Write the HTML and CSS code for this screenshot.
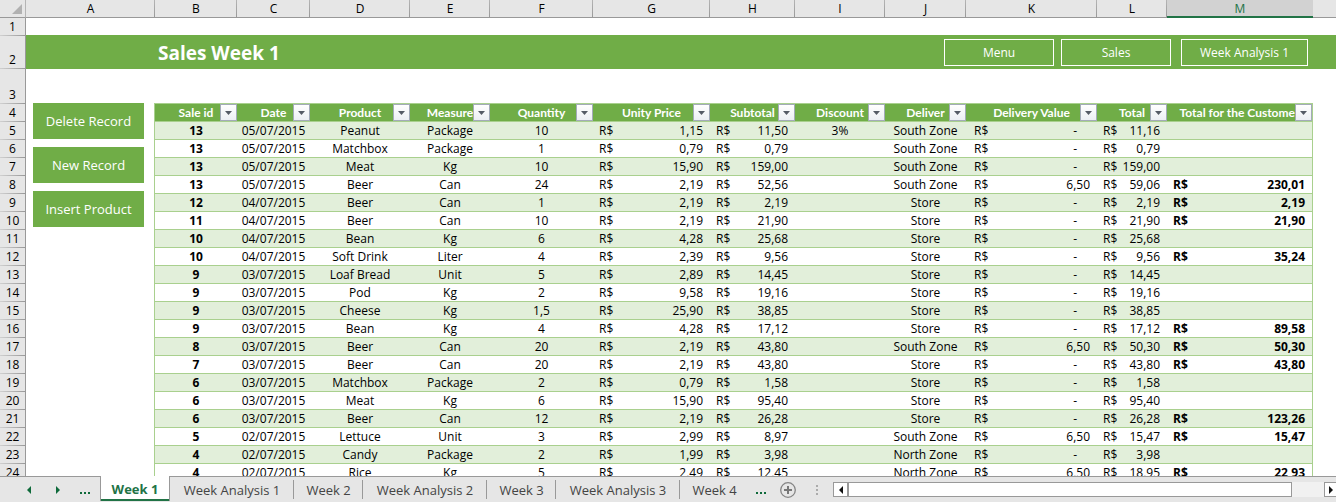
FILE: index.html
```html
<!DOCTYPE html>
<html lang="en">
<head>
<meta charset="utf-8">
<title>Sales Week 1</title>
<link rel="stylesheet" href="styles.css">
</head>
<body>
<div class="app">
  <div class="col-heads">
    <div class="corner"><svg width="10" height="10" viewBox="0 0 10 10"><path d="M10 0V10H0Z" fill="#b1b1b1"/></svg></div>
    <div class="col-head w-a">A</div>
    <div class="col-head w-b">B</div>
    <div class="col-head w-c">C</div>
    <div class="col-head w-d">D</div>
    <div class="col-head w-e">E</div>
    <div class="col-head w-f">F</div>
    <div class="col-head w-g">G</div>
    <div class="col-head w-h">H</div>
    <div class="col-head w-i">I</div>
    <div class="col-head w-j">J</div>
    <div class="col-head w-k">K</div>
    <div class="col-head w-l">L</div>
    <div class="col-head w-m selected">M</div>
    <div class="col-head w-rest"></div>
  </div>

  <div class="sheet">
    <div class="row-heads" id="row-heads"></div>
    <main class="cells">
      <header class="banner">
        <h1 class="title">Sales Week 1</h1>
        <nav class="banner-nav">
          <button class="nav-button" type="button">Menu</button>
          <button class="nav-button" type="button">Sales</button>
          <button class="nav-button wide" type="button">Week Analysis 1</button>
        </nav>
      </header>
      <div class="body">
        <aside class="actions">
          <button class="action" type="button">Delete Record</button>
          <button class="action" type="button">New Record</button>
          <button class="action" type="button">Insert Product</button>
        </aside>
        <div class="table-area">
          <table class="sales">
            <colgroup>
              <col class="c-b"><col class="c-c"><col class="c-d"><col class="c-e"><col class="c-f"><col class="c-g"><col class="c-h"><col class="c-i"><col class="c-j"><col class="c-k"><col class="c-l"><col class="c-m">
            </colgroup>
            <thead><tr id="sales-head"></tr></thead>
            <tbody id="sales-body"></tbody>
          </table>
        </div>
        <div class="margin-right"></div>
      </div>
    </main>
  </div>

  <footer class="tab-bar">
    <div class="tab-nav">
      <button class="icon-button" type="button" aria-label="Previous sheet"><svg width="4" height="8" viewBox="0 0 4 8"><path d="M4 0V8L0 4Z" fill="#0e6a3a"/></svg></button>
      <button class="icon-button" type="button" aria-label="Next sheet"><svg width="4" height="8" viewBox="0 0 4 8"><path d="M0 0V8L4 4Z" fill="#0e6a3a"/></svg></button>
      <button class="icon-button" type="button" aria-label="More sheets"><svg width="11" height="8" viewBox="0 0 11 8"><path d="M0 6h2v2H0zM4 6h2v2H4zM8 6h2v2H8z" fill="#0e6a3a"/></svg></button>
    </div>
    <div class="tabs">
      <button class="tab active" type="button">Week 1</button>
      <button class="tab analysis" type="button">Week Analysis 1</button>
      <button class="tab" type="button">Week 2</button>
      <button class="tab analysis" type="button">Week Analysis 2</button>
      <button class="tab" type="button">Week 3</button>
      <button class="tab analysis" type="button">Week Analysis 3</button>
      <button class="tab last" type="button">Week 4</button>
    </div>
    <div class="tab-tools">
      <button class="icon-button" type="button" aria-label="Hidden sheets"><svg width="11" height="8" viewBox="0 0 11 8"><path d="M0 6h2v2H0zM4 6h2v2H4zM8 6h2v2H8z" fill="#0e6a3a"/></svg></button>
      <button class="icon-button" type="button" aria-label="New sheet"><svg width="16" height="16" viewBox="0 0 16 16"><circle cx="8" cy="8" r="7.3" fill="none" stroke="#858585" stroke-width="1.3"/><path d="M7 4h2v3h3v2H9v3H7V9H4V7h3z" fill="#777"/></svg></button>
      <svg class="grip" width="2" height="10" viewBox="0 0 2 10"><path d="M0 0h2v2H0zM0 4h2v2H0zM0 8h2v2H0z" fill="#ababab"/></svg>
    </div>
    <div class="scrollbar">
      <button class="scroll-button" type="button" aria-label="Scroll left"><svg width="4" height="8" viewBox="0 0 4 8"><path d="M4 0V8L0 4Z" fill="#111"/></svg></button>
      <div class="scroll-thumb"></div>
      <div class="scroll-track"></div>
      <button class="scroll-button end" type="button" aria-label="Scroll right"><svg width="4" height="8" viewBox="0 0 4 8"><path d="M0 0V8L4 4Z" fill="#111"/></svg></button>
    </div>
  </footer>
</div>
<script src="app.js"></script>
</body>
</html>
```
FILE: styles.css
```css
:root {
  --green: #70ad47;
  --line: #a9d08e;
  --band: #e2efda;
  --chrome: #e6e6e6;
  --chrome-line: #999999;
  --accent: #217346;
  --ui: "Open Sans", "Noto Sans", sans-serif;
  --heading: Lato, "Open Sans", sans-serif;
}

* { box-sizing: border-box; }

body {
  margin: 0;
  background: #fff;
  color: #000;
  font-family: var(--ui);
  font-size: 12px;
}

button {
  margin: 0;
  padding: 0;
  border: 0;
  background: none;
  color: inherit;
  font: inherit;
  white-space: nowrap;
}

svg { display: block; flex: none; }

.app {
  display: flex;
  flex-direction: column;
  height: 100vh;
  overflow: hidden;
}

/* column letters */
.col-heads {
  display: flex;
  flex: none;
  height: 18px;
  background: var(--chrome);
}

.corner {
  display: flex;
  flex: none;
  justify-content: flex-end;
  align-items: flex-end;
  width: 26px;
  padding: 0 3px 3px 0;
  border-right: 1px solid #b4b4b4;
  border-bottom: 1px solid var(--chrome-line);
}

.col-head {
  min-width: 0;
  border-bottom: 1px solid var(--chrome-line);
  background: linear-gradient(#b4b4b4, #999) right / 1px 100% no-repeat;
  line-height: 17px;
  text-align: center;
}

.col-head.selected {
  border-bottom: 2px solid var(--accent);
  background: #d2d2d2;
  color: var(--accent);
}

.w-a { flex: 129 1 0; }
.w-b { flex: 82 1 0; }
.w-c { flex: 73 1 0; }
.w-d { flex: 100 1 0; }
.w-e { flex: 80 1 0; }
.w-f { flex: 103 1 0; }
.w-g { flex: 117 1 0; }
.w-h { flex: 85 1 0; }
.w-i { flex: 90 1 0; }
.w-j { flex: 81 1 0; }
.w-k { flex: 131 1 0; }
.w-l { flex: 70 1 0; }
.w-m { flex: 146 1 0; }
.w-rest { flex: 23 1 0; background: none; }

/* grid area */
.sheet {
  display: flex;
  flex: 1;
  min-height: 0;
  overflow: hidden;
}

.row-heads {
  flex: none;
  width: 26px;
  border-right: 1px solid var(--chrome-line);
  background: var(--chrome);
}

.row-head {
  display: flex;
  justify-content: center;
  align-items: flex-end;
  height: 18px;
  background: linear-gradient(to right, #d0d0d0, #999) bottom / 100% 1px no-repeat;
  line-height: 18px;
}

.row-head.banner-row { height: 33px; }
.row-head.spacer-row { height: 35px; }

.cells {
  flex: 1;
  min-width: 0;
  padding-top: 17px;
}

.banner {
  display: flex;
  justify-content: space-between;
  align-items: center;
  height: 34px;
  padding: 0 28px 0 132px;
  background: var(--green);
  color: #fff;
}

.title {
  margin: 0;
  padding-top: 2px;
  font-size: 19px;
  font-weight: 700;
  line-height: 32px;
}

.banner-nav {
  display: flex;
  gap: 7px;
}

.nav-button {
  width: 110px;
  height: 27px;
  padding-top: 1px;
  border: 1px solid #fff;
}

.nav-button.wide {
  width: 127px;
  margin-left: 3px;
}

.body {
  display: flex;
  margin-top: 34px;
}

.actions {
  display: flex;
  flex: 128 1 0;
  flex-direction: column;
  gap: 8px;
  min-width: 0;
}

.action {
  height: 36px;
  margin: 0 10px 0 7px;
  background: var(--green);
  color: #fff;
  font-size: 13px;
}

.table-area { flex: 1159 1 0; min-width: 0; }
.margin-right { flex: 23 1 0; }

.sales {
  width: 100%;
  border-right: 1px solid var(--line);
  border-left: 1px solid var(--line);
  border-collapse: separate;
  border-spacing: 0;
  table-layout: fixed;
}

.c-b { width: 82px; }
.c-c { width: 73px; }
.c-d { width: 100px; }
.c-e { width: 80px; }
.c-f { width: 103px; }
.c-g { width: 117px; }
.c-h { width: 85px; }
.c-i { width: 90px; }
.c-j { width: 81px; }
.c-k { width: 131px; }
.c-l { width: 70px; }
.c-m { width: 145px; }

.sales th,
.sales td {
  height: 18px;
  padding: 1px 0 0;
  border-bottom: 1px solid var(--line);
  line-height: 16px;
  text-align: center;
  white-space: nowrap;
}

.sales thead th {
  position: relative;
  height: 19px;
  border-top: 1px solid var(--line);
  background: var(--green);
  color: #fff;
  font-family: var(--heading);
  font-weight: 700;
}

.sales tbody tr:nth-child(odd) { background: var(--band); }

.head-label {
  display: flex;
  justify-content: center;
  overflow: hidden;
}

.filter {
  position: absolute;
  top: 0;
  right: 0;
  display: flex;
  justify-content: center;
  align-items: center;
  width: 17px;
  height: 17px;
  border: 1px solid #a3abb8;
  background: linear-gradient(#fff, #eceff4);
}

.money {
  display: flex;
  justify-content: space-between;
  padding: 0 7px 0 6px;
}

.money.delivery { padding-left: 8px; }
.money.dash { padding-right: 20px; }
.strong { font-weight: 700; }

/* sheet tabs */
.tab-bar {
  display: flex;
  flex: none;
  height: 26px;
  background: var(--chrome);
  color: #444;
  font-size: 13px;
}

.tab-nav {
  display: flex;
  flex: none;
  align-items: center;
  gap: 25px;
  width: 100px;
  padding-left: 27px;
  border-top: 1px solid var(--chrome-line);
}

.tab-nav .icon-button:last-child { margin-left: -5px; }

.tabs { display: flex; }

.tab {
  width: 69px;
  border-top: 1px solid var(--chrome-line);
  background: linear-gradient(#999, #999) right 3px / 1px 19px no-repeat;
}

.tab.analysis { width: 124px; }
.tab.last { background: none; }

.tab.active {
  width: 70px;
  margin-bottom: 1px;
  border: solid var(--chrome-line);
  border-width: 0 1px;
  background: linear-gradient(var(--accent), var(--accent)) bottom / 100% 2px no-repeat #fff;
  color: var(--accent);
  font-weight: 700;
}

.tab-tools {
  display: flex;
  flex: none;
  align-items: center;
  gap: 13px;
  width: 84px;
  padding-left: 7px;
  border-top: 1px solid var(--chrome-line);
}

.grip { margin-left: 7px; }

.scrollbar {
  display: flex;
  flex: 1;
  align-items: center;
  min-width: 0;
  border-top: 1px solid var(--chrome-line);
}

.scroll-button {
  display: flex;
  flex: none;
  justify-content: center;
  align-items: center;
  width: 15px;
  height: 15px;
  border: 1px solid var(--chrome-line);
  background: #fff;
}

.scroll-button.end { width: 12px; border-right: 0; }

.scroll-thumb {
  flex: 444 1 0;
  height: 15px;
  border: 1px solid var(--chrome-line);
  background: #fff;
}

.scroll-track {
  flex: 32 1 0;
  height: 15px;
  background: #f1f1f1;
}
```
FILE: app.js
```js
const heads = ["Sale id", "Date", "Product", "Measure", "Quantity", "Unity Price",
  "Subtotal", "Discount", "Deliver", "Delivery Value", "Total", "Total for the Customer"];

// id | date | product | measure | quantity | price | subtotal | discount | deliver | delivery | total | customer total
const records = `13|05/07/2015|Peanut|Package|10|1,15|11,50|3%|South Zone|-|11,16|
13|05/07/2015|Matchbox|Package|1|0,79|0,79||South Zone|-|0,79|
13|05/07/2015|Meat|Kg|10|15,90|159,00||South Zone|-|159,00|
13|05/07/2015|Beer|Can|24|2,19|52,56||South Zone|6,50|59,06|230,01
12|04/07/2015|Beer|Can|1|2,19|2,19||Store|-|2,19|2,19
11|04/07/2015|Beer|Can|10|2,19|21,90||Store|-|21,90|21,90
10|04/07/2015|Bean|Kg|6|4,28|25,68||Store|-|25,68|
10|04/07/2015|Soft Drink|Liter|4|2,39|9,56||Store|-|9,56|35,24
9|03/07/2015|Loaf Bread|Unit|5|2,89|14,45||Store|-|14,45|
9|03/07/2015|Pod|Kg|2|9,58|19,16||Store|-|19,16|
9|03/07/2015|Cheese|Kg|1,5|25,90|38,85||Store|-|38,85|
9|03/07/2015|Bean|Kg|4|4,28|17,12||Store|-|17,12|89,58
8|03/07/2015|Beer|Can|20|2,19|43,80||South Zone|6,50|50,30|50,30
7|03/07/2015|Beer|Can|20|2,19|43,80||Store|-|43,80|43,80
6|03/07/2015|Matchbox|Package|2|0,79|1,58||Store|-|1,58|
6|03/07/2015|Meat|Kg|6|15,90|95,40||Store|-|95,40|
6|03/07/2015|Beer|Can|12|2,19|26,28||Store|-|26,28|123,26
5|02/07/2015|Lettuce|Unit|3|2,99|8,97||South Zone|6,50|15,47|15,47
4|02/07/2015|Candy|Package|2|1,99|3,98||North Zone|-|3,98|
4|02/07/2015|Rice|Kg|5|2,49|12,45||North Zone|6,50|18,95|22,93`.split("\n").map(r => r.split("|"));

const moneyColumns = [5, 6, 9, 10, 11];

function cell(value, column) {
  const strong = column === 0 || column === 11 ? "strong" : "";
  if (!moneyColumns.includes(column) || value === "") {
    return `<td class="${strong}">${value}</td>`;
  }
  const extra = (column === 9 ? " delivery" : "") + (value === "-" ? " dash" : "");
  return `<td class="${strong}"><div class="money${extra}"><span>R$</span><span>${value}</span></div></td>`;
}

document.getElementById("sales-head").innerHTML = heads.map(label =>
  `<th scope="col"><div class="head-label">${label}</div><button class="filter" type="button" aria-label="Filter ${label}"><svg width="7" height="4" viewBox="0 0 7 4"><path d="M0 0H7L3.5 4Z" fill="#555b66"/></svg></button></th>`).join("");

document.getElementById("sales-body").innerHTML = records.map(r => `<tr>${r.map(cell).join("")}</tr>`).join("");

const rowClass = { 2: " banner-row", 3: " spacer-row" };
document.getElementById("row-heads").innerHTML = Array.from({ length: records.length + 4 }, (_, i) =>
  `<div class="row-head${rowClass[i + 1] || ""}">${i + 1}</div>`).join("");
```
